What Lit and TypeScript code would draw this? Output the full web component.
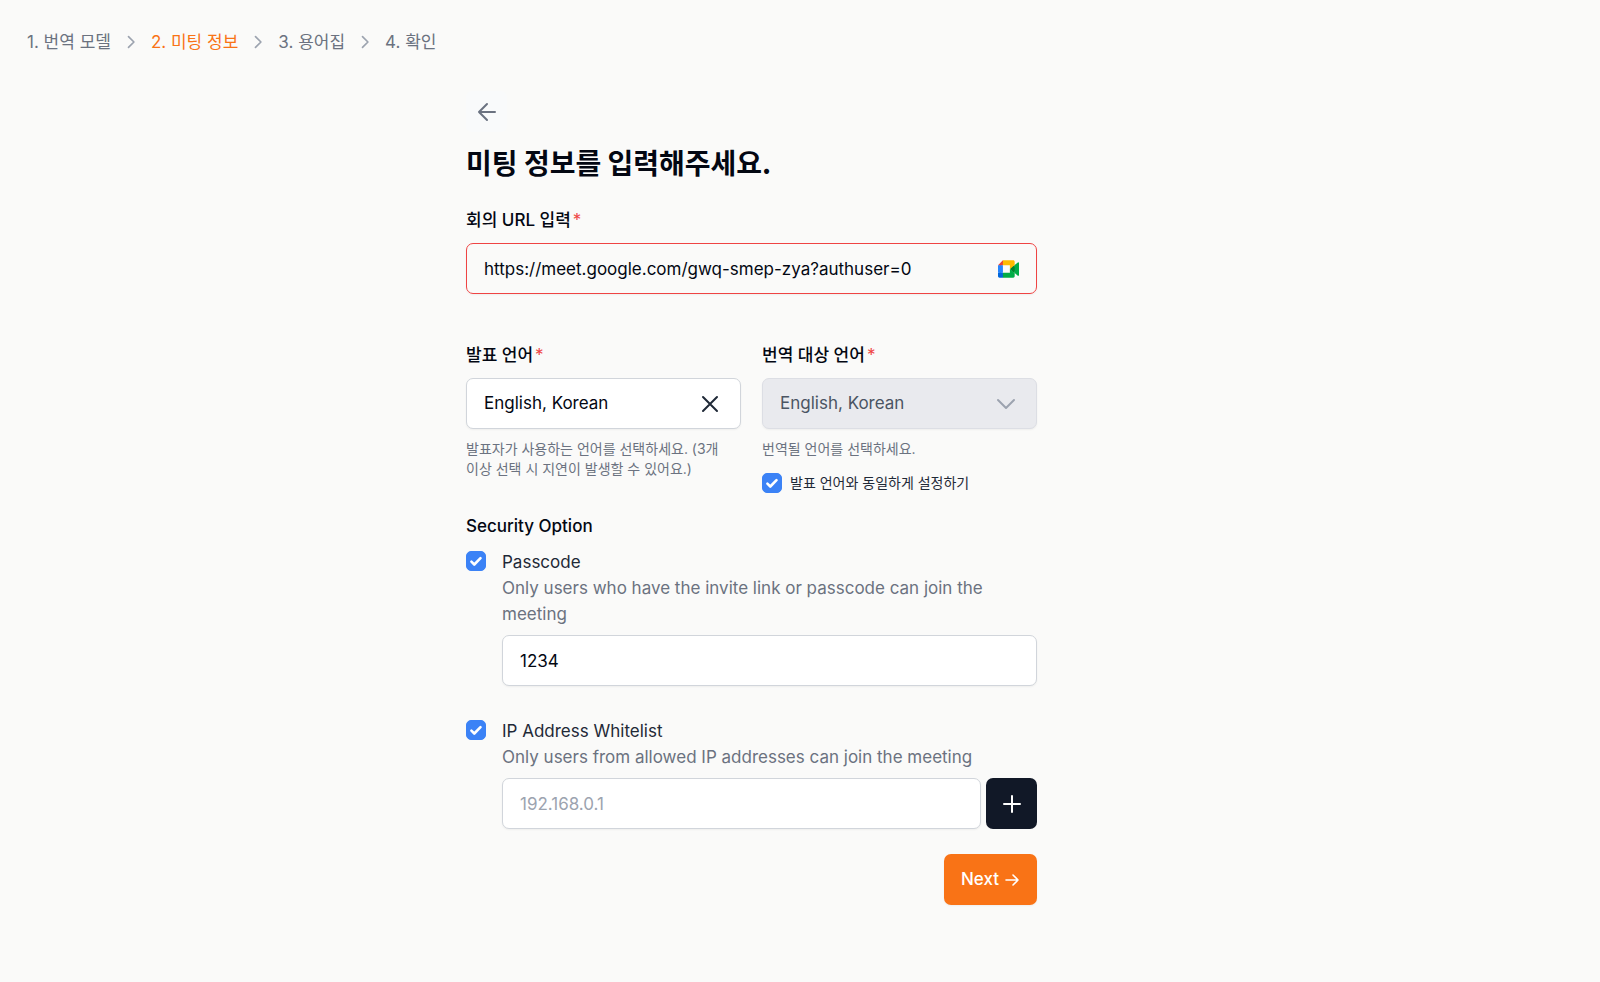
import { LitElement, html, css, svg } from "lit";
import { customElement, property, state } from "lit/decorators.js";
import { classMap } from "lit/directives/class-map.js";

const chevronRight = svg`<path d="M9 5.5l6.5 6.5L9 18.5" />`;
const chevronDown = svg`<path d="M4 8l8 8 8-8" />`;

@customElement("step-trail")
class StepTrail extends LitElement {
  @property({ type: Number }) current = 0;
  @property({ attribute: false }) steps: string[] = [];

  static styles = css`
    .list {
      display: flex;
      flex-wrap: wrap;
      align-items: center;
      gap: 10px;
      margin: 0;
      padding: 0;
      list-style: none;
      font-size: 17px;
      line-height: 26px;
      color: #6b7280;
    }
    .step {
      display: flex;
      align-items: center;
      gap: 10px;
    }
    .active {
      color: #f97316;
    }
    .chevron {
      width: 20px;
      height: 20px;
      fill: none;
      stroke: #9ca3af;
      stroke-width: 2;
      stroke-linecap: round;
      stroke-linejoin: round;
    }
  `;

  render() {
    return html`<nav aria-label="breadcrumb">
      <ol class="list">
        ${this.steps.map(
          (s, i) => html`<li class="step">
            ${i > 0
              ? html`<svg class="chevron" viewBox="0 0 24 24" aria-hidden="true">${chevronRight}</svg>`
              : null}
            <span class=${classMap({ active: i === this.current })}>${s}</span>
          </li>`
        )}
      </ol>
    </nav>`;
  }
}

@customElement("app-root")
class AppRoot extends LitElement {
  @state() private passcode = "1234";

  static styles = css`
    :host {
      display: block;
      box-sizing: border-box;
      min-height: 100vh;
      padding: 29px 27px;
      background: #fafaf9;
      color: #030712;
      font-family: Inter, "Noto Sans CJK KR", sans-serif;
      font-size: 17px;
      line-height: 25px;
    }
    * {
      box-sizing: border-box;
    }
    button,
    input,
    select {
      font: inherit;
      color: inherit;
      margin: 0;
    }
    button {
      cursor: pointer;
    }
    .page {
      max-width: 1449px;
      padding-top: 36px;
    }
    .form {
      display: flex;
      flex-direction: column;
      max-width: 571px;
      margin: 0 auto;
    }
    .icon {
      display: block;
      width: 24px;
      height: 24px;
      fill: none;
      stroke: currentColor;
      stroke-width: 2;
      stroke-linecap: round;
      stroke-linejoin: round;
      flex: none;
    }
    .back {
      display: grid;
      place-items: center;
      width: 41px;
      height: 41px;
      padding: 0;
      border: 0;
      border-radius: 6px;
      background: #f9fafb;
      color: #6b7280;
    }
    .title {
      margin: 12px 0 28px;
      font-family: "Noto Sans CJK KR", sans-serif;
      font-size: 28px;
      line-height: 36px;
      font-weight: 700;
    }
    .field {
      display: flex;
      flex-direction: column;
      min-width: 0;
    }
    .label {
      margin-bottom: 10px;
      font-weight: 500;
    }
    .required {
      margin-left: 2px;
      font-weight: 400;
      color: #ef4444;
    }
    .box {
      display: flex;
      align-items: center;
      height: 51px;
      padding: 0 17px;
      border: 1px solid #d1d5db;
      border-radius: 7px;
      background: #fff;
      box-shadow: 0 1px 2px rgb(0 0 0 / 5%);
    }
    .box.invalid {
      border-color: #ef4444;
      background: transparent;
    }
    .box.disabled {
      background: #e9eaee;
      border-color: #dcdee4;
      color: #4b5563;
    }
    .control {
      flex: 1;
      min-width: 0;
      height: 100%;
      padding: 0;
      border: 0;
      outline: 0;
      background: transparent;
      appearance: none;
      opacity: 1;
    }
    .control::placeholder {
      color: #9ca3af;
    }
    .meet {
      width: 21px;
      height: 18px;
      flex: none;
    }
    .languages {
      display: grid;
      grid-template-columns: 1fr 1fr;
      gap: 21px;
      margin-top: 49px;
    }
    .clear {
      padding: 0;
      border: 0;
      background: none;
      color: #1f2937;
    }
    .clear,
    .chevron {
      margin-right: 1px;
    }
    .chevron {
      color: #9ca3af;
    }
    .help {
      margin: 10px 0 0;
      font-size: 14px;
      line-height: 20px;
      color: #6b7280;
      word-break: keep-all;
    }
    .same {
      display: flex;
      align-items: center;
      gap: 8px;
      margin-top: 13px;
      font-size: 14px;
      line-height: 21px;
      color: #1f2937;
    }
    .check {
      display: grid;
      flex: none;
      width: 20px;
      height: 20px;
    }
    .check > * {
      grid-area: 1 / 1;
    }
    .tick {
      width: 20px;
      height: 20px;
      appearance: none;
      border-radius: 5px;
      border: 1px solid #d1d5db;
      background: #fff;
    }
    .tick:checked {
      border-color: #3b82f6;
      background: #3b82f6;
    }
    .mark {
      width: 20px;
      height: 20px;
      fill: none;
      stroke: #fff;
      stroke-width: 2.6;
      stroke-linecap: round;
      stroke-linejoin: round;
      pointer-events: none;
    }
    .section {
      margin: 21px 0 10px;
      font-size: 17px;
      line-height: 25px;
      font-weight: 500;
    }
    .option {
      display: grid;
      grid-template-columns: 20px 1fr;
      column-gap: 16px;
      line-height: 26px;
    }
    .option + .option {
      margin-top: 32px;
    }
    .option .check {
      margin-top: 2px;
    }
    .name {
      display: block;
      color: #1f2937;
    }
    .desc {
      margin: 0 0 8px;
      color: #6b7280;
    }
    .row {
      display: flex;
      gap: 5px;
    }
    .row .box {
      flex: 1;
    }
    .add {
      display: grid;
      place-items: center;
      width: 51px;
      height: 51px;
      padding: 0;
      border: 0;
      border-radius: 7px;
      background: #111827;
      color: #fff;
    }
    .next {
      display: flex;
      align-items: center;
      align-self: flex-end;
      gap: 5px;
      height: 51px;
      margin-top: 25px;
      padding: 0 17px;
      border: 0;
      border-radius: 7px;
      background: #f97316;
      color: #fff;
      font-weight: 500;
      box-shadow: 0 1px 2px rgb(0 0 0 / 5%);
    }
    .arrow {
      width: 16px;
      height: 16px;
      stroke-width: 1.6;
    }
  `;

  private check(id: string) {
    return html`<span class="check">
      <input class="tick" type="checkbox" id=${id} checked />
      <svg class="mark" viewBox="0 0 20 20" aria-hidden="true"><path d="M5.4 10.6l2.9 2.9 6.2-6.4" /></svg>
    </span>`;
  }

  render() {
    return html`
      <step-trail
        .steps=${["1. 번역 모델", "2. 미팅 정보", "3. 용어집", "4. 확인"]}
        current="1"
      ></step-trail>
      <main class="page">
        <form class="form" @submit=${(e: Event) => e.preventDefault()}>
          <button class="back" type="button" aria-label="Back">
            <svg class="icon" viewBox="0 0 24 24"><path d="M20 12H4M12 4l-8 8 8 8" /></svg>
          </button>
          <h1 class="title">미팅 정보를 입력해주세요.</h1>

          <div class="field">
            <label class="label" for="url">회의 URL 입력<span class="required">*</span></label>
            <div class="box invalid">
              <input class="control" id="url" type="text" value="https://meet.google.com/gwq-smep-zya?authuser=0" />
              <svg class="meet" viewBox="0 0 87.5 72" aria-hidden="true">
                <path fill="#00832d" d="M49.5 36l8.53 9.75 11.47 7.33 2-17.02-2-16.64-11.69 6.44z" />
                <path fill="#0066da" d="M0 51.5V66c0 3.315 2.685 6 6 6h14.5l3-10.96-3-9.54-9.95-3z" />
                <path fill="#e94235" d="M20.5 0L0 20.5l10.55 3 9.95-3 2.95-9.41z" />
                <path fill="#2684fc" d="M20.5 20.5H0v31h20.5z" />
                <path fill="#00ac47" d="M82.6 8.68L69.5 19.42v33.66l13.16 10.79c1.97 1.54 4.85.135 4.85-2.37V11c0-2.535-2.945-3.925-4.91-2.32zM49.5 36v15.5h-29V72h43c3.315 0 6-2.685 6-6V53.08z" />
                <path fill="#ffba00" d="M63.5 0h-43v20.5h29V36l20-16.57V6c0-3.315-2.685-6-6-6z" />
              </svg>
            </div>
          </div>

          <div class="languages">
            <div class="field">
              <label class="label" for="source">발표 언어<span class="required">*</span></label>
              <div class="box">
                <select class="control" id="source"><option>English, Korean</option></select>
                <button class="clear" type="button" aria-label="Clear">
                  <svg class="icon" viewBox="0 0 24 24"><path d="M5 5l14 14M19 5L5 19" /></svg>
                </button>
              </div>
              <p class="help">발표자가 사용하는 언어를 선택하세요. (3개 이상 선택 시 지연이 발생할 수 있어요.)</p>
            </div>
            <div class="field">
              <label class="label" for="target">번역 대상 언어<span class="required">*</span></label>
              <div class="box disabled">
                <select class="control" id="target" disabled><option>English, Korean</option></select>
                <svg class="icon chevron" viewBox="0 0 24 24" aria-hidden="true">${chevronDown}</svg>
              </div>
              <p class="help">번역될 언어를 선택하세요.</p>
              <div class="same">
                ${this.check("same")}
                <label for="same">발표 언어와 동일하게 설정하기</label>
              </div>
            </div>
          </div>

          <h2 class="section">Security Option</h2>
          <div class="option">
            ${this.check("use-passcode")}
            <div>
              <label class="name" for="use-passcode">Passcode</label>
              <p class="desc">Only users who have the invite link or passcode can join the meeting</p>
              <div class="box">
                <input class="control" type="text" aria-label="Passcode" .value=${this.passcode}
                  @input=${(e: Event) => (this.passcode = (e.target as HTMLInputElement).value)} />
              </div>
            </div>
          </div>
          <div class="option">
            ${this.check("use-ip")}
            <div>
              <label class="name" for="use-ip">IP Address Whitelist</label>
              <p class="desc">Only users from allowed IP addresses can join the meeting</p>
              <div class="row">
                <div class="box">
                  <input class="control" type="text" aria-label="IP address" placeholder="192.168.0.1" />
                </div>
                <button class="add" type="button" aria-label="Add IP address">
                  <svg class="icon" viewBox="0 0 24 24"><path d="M12 4v16M4 12h16" /></svg>
                </button>
              </div>
            </div>
          </div>

          <button class="next" type="submit">
            Next
            <svg class="icon arrow" viewBox="0 0 16 16"><path d="M2 8h12M9 3l5 5-5 5" /></svg>
          </button>
        </form>
      </main>
    `;
  }
}
